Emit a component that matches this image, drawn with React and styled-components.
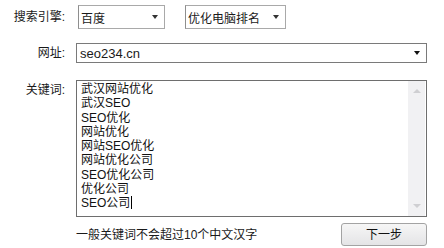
import React from "react";
import styled, { createGlobalStyle } from "styled-components";

const GlobalStyle = createGlobalStyle`
  html, body {
    margin: 0;
    padding: 0;
    background: #ffffff;
  }
  body {
    font-family: "Liberation Sans", "Noto Sans CJK SC", sans-serif;
    font-size: 12px;
    color: #1a1a1a;
  }
`;

const Form = styled.div`
  width: 444px;
  height: 248px;
  box-sizing: border-box;
  padding-top: 5px;
  display: flex;
  flex-direction: column;
`;

const Field = styled.div`
  display: flex;
  align-items: ${(p) => (p.top ? "flex-start" : "center")};
  gap: 11px;
  margin-top: ${(p) => p.mt || 0}px;
`;

const Label = styled.div`
  width: 65px;
  flex: none;
  text-align: right;
  white-space: nowrap;
  line-height: 18px;
  padding-top: ${(p) => (p.top ? "1px" : "0")};
`;

const Selects = styled.div`
  display: flex;
  align-items: center;
  gap: 20px;
  margin-left: 2px;
`;

const Select = styled.div`
  width: ${(p) => p.width}px;
  height: 24px;
  box-sizing: border-box;
  border: 1px solid #a9a9a9;
  border-left-color: #8e8e8e;
  background: #fff;
  display: flex;
  align-items: center;
  justify-content: space-between;
  padding: 0 6px 0 2px;
`;

const Arrow = styled.span`
  width: 0;
  height: 0;
  border-left: 3px solid transparent;
  border-right: 3px solid transparent;
  border-top: 4px solid ${(p) => p.color || "#333"};
`;

const Input = styled.div`
  width: 351px;
  height: 20px;
  box-sizing: border-box;
  border: 1px solid #7a7a7a;
  display: flex;
  align-items: center;
  justify-content: space-between;
  padding: 0 6px 0 3px;
  font-size: 13px;
`;

const TextBox = styled.div`
  width: 351px;
  height: 137px;
  box-sizing: border-box;
  border: 1px solid #6e6e6e;
  display: flex;
  background: #fff;
`;

const Lines = styled.div`
  flex: 1;
  padding: 1px 0 0 4px;
  line-height: 14.25px;
  color: #111;
`;

const Line = styled.div`
  white-space: nowrap;
`;

const Caret = styled.span`
  display: inline-block;
  width: 1px;
  height: 13px;
  background: #000;
  vertical-align: -2px;
  margin-left: 1px;
`;

const Scrollbar = styled.div`
  width: 17px;
  margin-right: 1px;
  background: #f1f1f3;
  display: flex;
  flex-direction: column;
  justify-content: space-between;
  align-items: center;
  padding: 8px 0;
`;

const ScrollArrow = styled.span`
  width: 0;
  height: 0;
  border-left: 4px solid transparent;
  border-right: 4px solid transparent;
  border-${(p) => (p.down ? "top" : "bottom")}: 4px solid #cfcfd2;
`;

const Footer = styled.div`
  width: 351px;
  display: flex;
  align-items: center;
  justify-content: space-between;
  margin-left: 76px;
  margin-top: 6px;
`;

const Hint = styled.span`
  white-space: nowrap;
  line-height: 18px;
`;

const Button = styled.button`
  width: 86px;
  height: 23px;
  box-sizing: border-box;
  border: 1px solid #a3a3a3;
  border-radius: 3px;
  background: linear-gradient(#f6f6f6, #e4e4e6);
  font-family: inherit;
  font-size: 12px;
  line-height: 18px;
  color: #111;
  padding: 0;
`;

const keywords = [
  "武汉网站优化",
  "武汉SEO",
  "SEO优化",
  "网站优化",
  "网站SEO优化",
  "网站优化公司",
  "SEO优化公司",
  "优化公司",
  "SEO公司",
];

export default function App() {
  return (
    <>
      <GlobalStyle />
      <Form>
        <Field>
          <Label>搜索引擎:</Label>
          <Selects>
            <Select width={87}>
              <span>百度</span>
              <Arrow />
            </Select>
            <Select width={101}>
              <span>优化电脑排名</span>
              <Arrow />
            </Select>
          </Selects>
        </Field>

        <Field mt={14}>
          <Label>网址:</Label>
          <Input>
            <span>seo234.cn</span>
            <Arrow color="#111" />
          </Input>
        </Field>

        <Field top mt={17}>
          <Label top>关键词:</Label>
          <TextBox>
            <Lines>
              {keywords.map((k, i) => (
                <Line key={k}>
                  {k}
                  {i === keywords.length - 1 && <Caret />}
                </Line>
              ))}
            </Lines>
            <Scrollbar>
              <ScrollArrow />
              <ScrollArrow down />
            </Scrollbar>
          </TextBox>
        </Field>

        <Footer>
          <Hint>一般关键词不会超过10个中文汉字</Hint>
          <Button>下一步</Button>
        </Footer>
      </Form>
    </>
  );
}
